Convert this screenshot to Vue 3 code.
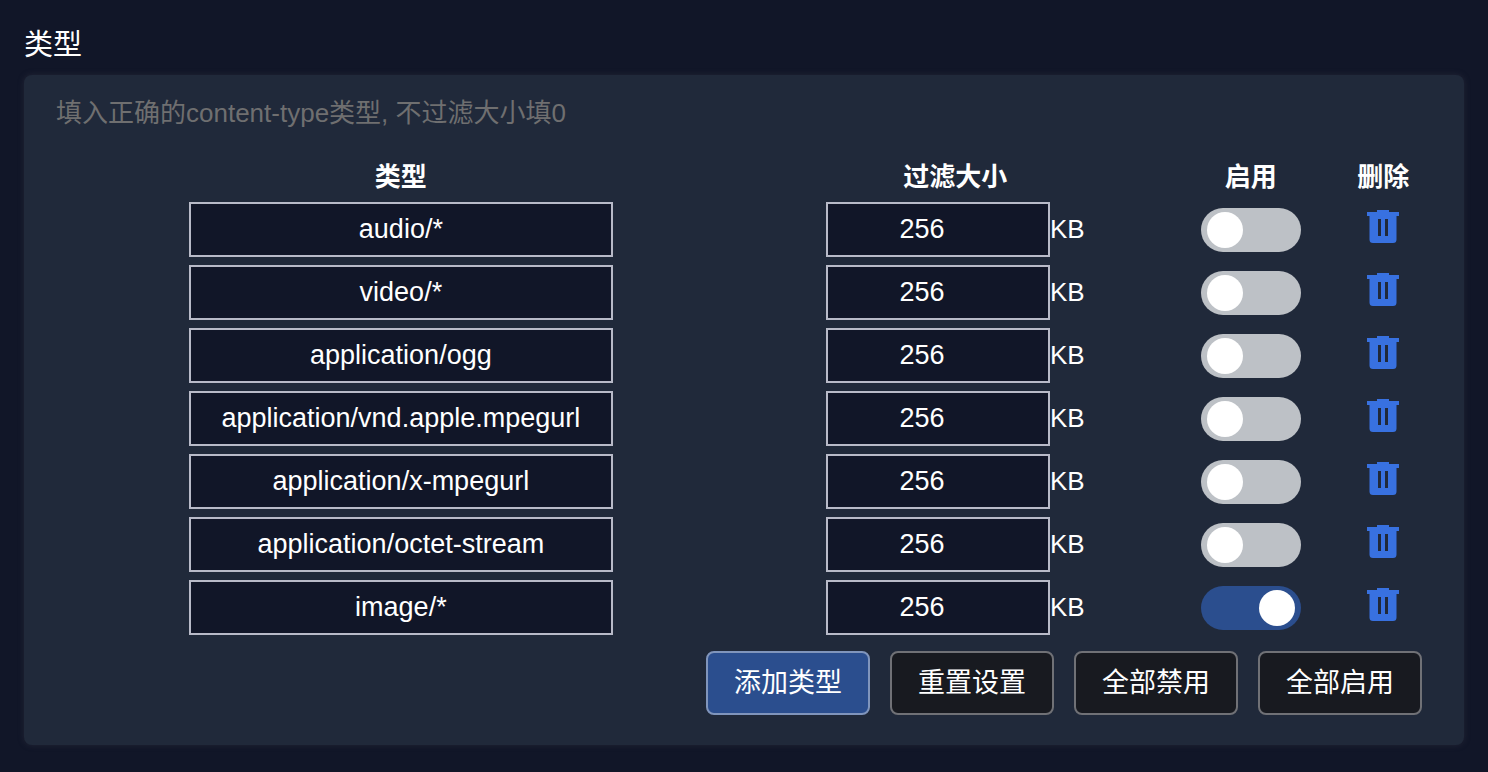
<script setup>
import { ref } from 'vue'

const makeDefaults = () => [
  { id: 1, type: 'audio/*', size: 256, enabled: false },
  { id: 2, type: 'video/*', size: 256, enabled: false },
  { id: 3, type: 'application/ogg', size: 256, enabled: false },
  { id: 4, type: 'application/vnd.apple.mpegurl', size: 256, enabled: false },
  { id: 5, type: 'application/x-mpegurl', size: 256, enabled: false },
  { id: 6, type: 'application/octet-stream', size: 256, enabled: false },
  { id: 7, type: 'image/*', size: 256, enabled: true }
]

const rows = ref(makeDefaults())
let nextId = 8

function addRow() {
  rows.value.push({ id: nextId++, type: '', size: 0, enabled: true })
}
function reset() {
  rows.value = makeDefaults()
}
function removeRow(id) {
  rows.value = rows.value.filter((row) => row.id !== id)
}
function setAll(enabled) {
  rows.value.forEach((row) => (row.enabled = enabled))
}
</script>

<template>
  <main class="page">
    <h1 class="title">类型</h1>
    <section class="card">
      <p class="hint">填入正确的content-type类型, 不过滤大小填0</p>
      <table class="types">
        <colgroup>
          <col class="col-type" />
          <col class="col-size" />
          <col class="col-enabled" />
          <col class="col-delete" />
        </colgroup>
        <thead>
          <tr>
            <th id="h-type" scope="col">类型</th>
            <th id="h-size" scope="col">过滤大小</th>
            <th id="h-enabled" scope="col">启用</th>
            <th id="h-delete" scope="col">删除</th>
          </tr>
        </thead>
        <tbody>
          <tr v-for="row in rows" :key="row.id">
            <td>
              <input v-model="row.type" class="field field-type" type="text" spellcheck="false" aria-labelledby="h-type" />
            </td>
            <td>
              <label class="size">
                <input v-model="row.size" class="field field-size" type="number" min="0" aria-labelledby="h-size" />
                <span>KB</span>
              </label>
            </td>
            <td>
              <input v-model="row.enabled" class="switch" type="checkbox" role="switch" aria-labelledby="h-enabled" />
            </td>
            <td>
              <button class="delete" type="button" aria-labelledby="h-delete" @click="removeRow(row.id)">
                <svg viewBox="0 0 32 33" width="32" height="33" aria-hidden="true">
                  <path
                    fill="currentColor"
                    fill-rule="evenodd"
                    d="M10 0H22V2H32V6H29.500V29.500Q29.500 33 26 33H6Q2.500 33 2.500 29.500V6H0V2H10ZM11 9V26H14V9ZM18 9V26H21V9Z"
                  />
                </svg>
              </button>
            </td>
          </tr>
        </tbody>
      </table>
      <div class="actions">
        <button class="btn primary" type="button" @click="addRow">添加类型</button>
        <button class="btn" type="button" @click="reset">重置设置</button>
        <button class="btn" type="button" @click="setAll(false)">全部禁用</button>
        <button class="btn" type="button" @click="setAll(true)">全部启用</button>
      </div>
    </section>
  </main>
</template>

<style>
body {
  background: #111628;
}
</style>

<style scoped>
.page {
  padding: 25px 24px 24px;
  color: #fff;
  font-family: "Liberation Sans", "Noto Sans CJK SC", sans-serif;
  font-size: 26px;
  line-height: 40px;
}
.title {
  margin: 0 0 10px;
  font-size: 29px;
  font-weight: 400;
}
.card {
  padding: 18px 34px 30px 32px;
  border-radius: 8px;
  background: #20293a;
  box-shadow: 0 0 6px rgba(60, 60, 75, 0.4);
}
.hint {
  margin: 0 0 22px;
  color: #6f6f70;
}
.types {
  width: 100%;
  table-layout: fixed;
  border-collapse: collapse;
}
.col-type { width: 50.2%; }
.col-size { width: 30.5%; }
.col-enabled { width: 12.5%; }
.col-delete { width: 6.8%; }
th,
td {
  padding: 0;
  text-align: center;
  vertical-align: middle;
}
th {
  height: 43px;
  font-weight: 700;
}
td {
  height: 63px;
}
.field {
  box-sizing: border-box;
  display: block;
  height: 55px;
  margin: 0;
  padding: 0 2px;
  border: 2px solid #b8bac8;
  border-radius: 0;
  background: #111628;
  color: #fff;
  font: inherit;
  font-size: 27px;
  text-align: center;
}
.field-type {
  width: 424px;
  max-width: 100%;
  margin: 0 auto;
}
.size {
  display: flex;
  align-items: center;
  justify-content: center;
}
.size span {
  padding-bottom: 2px;
}
.field-size {
  width: 224px;
  padding-right: 34px;
  appearance: textfield;
}
.field-size::-webkit-inner-spin-button {
  appearance: none;
  margin: 0;
}
.switch {
  appearance: none;
  display: flex;
  align-items: center;
  box-sizing: border-box;
  width: 100px;
  height: 44px;
  margin: 0 auto;
  padding: 0 6px;
  border-radius: 22px;
  background: #bdc1c6;
  cursor: pointer;
}
.switch::before {
  content: "";
  width: 36px;
  height: 36px;
  border-radius: 50%;
  background: #fff;
}
.switch:checked {
  justify-content: flex-end;
  background: #2b4e8e;
}
.delete {
  display: block;
  margin: 0 auto;
  padding: 0 0 6px;
  border: 0;
  background: none;
  color: #3871e0;
  cursor: pointer;
}
.delete svg {
  display: block;
}
.actions {
  display: flex;
  justify-content: flex-end;
  gap: 20px;
  padding: 12px 8px 0 0;
}
.btn {
  box-sizing: border-box;
  height: 64px;
  padding: 0 26px;
  border: 2px solid #707176;
  border-radius: 8px;
  background: #181a20;
  color: #fff;
  font: inherit;
  font-size: 27px;
  cursor: pointer;
}
.btn.primary {
  border-color: #8095bc;
  background: #2b4e8e;
}
</style>
